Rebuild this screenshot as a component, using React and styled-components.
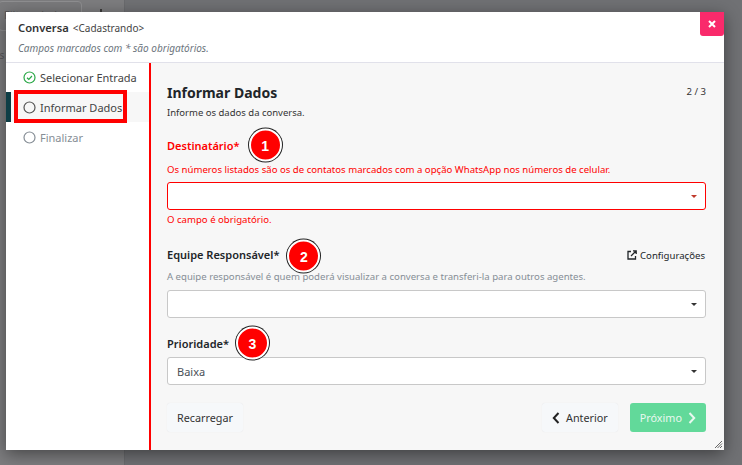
import React from 'react';
import styled, { createGlobalStyle } from 'styled-components';

const GlobalStyle = createGlobalStyle`
  html, body { margin: 0; padding: 0; height: 100%; background: #6f7073; overflow: hidden; }
  body { font-family: 'Noto Sans', 'Open Sans', sans-serif; color: #212529; }
  * { box-sizing: border-box; }
`;

const Backdrop = styled.div`
  position: relative;
  width: 742px;
  height: 465px;
  padding: 12px 18px 15px 6px;
  background: #707174;
`;

// what shows of the page behind the modal
const GhostSide = styled.div`
  position: absolute;
  left: 0;
  top: 0;
  bottom: 0;
  width: 125px;
  background: #7d7d7f;
  border-right: 1px solid #6a6b6e;
`;

const GhostInput = styled.div`
  position: absolute;
  left: -2px;
  top: 1px;
  width: 84px;
  height: 30px;
  padding: 5px 0 0 5px;
  border: 1px solid #8f8f91;
  border-radius: 4px;
  background: #7a7a7c;
  font-size: 11px;
  color: #58585a;
`;

const GhostMark = styled.div`
  position: absolute;
  left: 100px;
  top: 9px;
  width: 2px;
  height: 3px;
  background: #3b3a3a;
`;

const GhostText = styled.div`
  position: absolute;
  left: -6px;
  top: 48px;
  font-size: 10px;
  color: #58585a;
`;

const Modal = styled.div`
  position: relative;
  height: 438px;
  display: flex;
  flex-direction: column;
  background: #fff;
  box-shadow: 0 4px 16px rgba(0, 0, 0, 0.45);
`;

const Header = styled.header`
  height: 51px;
  flex: none;
  padding: 8px 12px 0;
  border-bottom: 1px solid #e1e1ea;
`;

const TitleRow = styled.div`
  display: flex;
  align-items: baseline;
  gap: 4px;
  height: 16px;
  line-height: 16px;
`;

const Title = styled.span`
  font-size: 11.2px;
  font-weight: 600;
  color: #333;
`;

const TitleState = styled.span`
  font-size: 10px;
  color: #444;
`;

const Hint = styled.div`
  margin-top: 5px;
  font-size: 10px;
  line-height: 14px;
  font-style: italic;
  color: #6c757d;
`;

const CloseButton = styled.button`
  position: absolute;
  top: 0;
  right: 0;
  width: 24px;
  height: 24px;
  padding: 0;
  border: 0;
  border-radius: 0 0 3px 3px;
  background: #f92a6b;
  display: flex;
  align-items: center;
  justify-content: center;
`;

const Body = styled.div`
  flex: 1;
  display: flex;
  min-height: 0;
`;

const Sidebar = styled.nav`
  width: 145px;
  flex: none;
  border-right: 2px solid #f00;
`;

const Step = styled.div`
  position: relative;
  height: 30px;
  display: flex;
  align-items: center;
  gap: 4px;
  padding-left: 17px;
  font-size: 11px;
  color: ${(p) => (p.$muted ? '#868e96' : '#444')};
  background: ${(p) => (p.$active ? '#f7f7f7' : 'transparent')};
  ${(p) => p.$active && 'border-left: 5px solid #0e3e46; padding-left: 12px;'}

  &:first-child {
    margin-top: -1px;
  }
`;

const Highlight = styled.div`
  position: absolute;
  left: 8px;
  top: 78px;
  width: 113px;
  height: 33px;
  border: 4px solid #f00;
  pointer-events: none;
`;

const Content = styled.main`
  flex: 1;
  min-width: 0;
  padding: 19px 18px 0 16px;
  background: #f7f7f7;
`;

const ContentHead = styled.div`
  display: flex;
  justify-content: space-between;
  align-items: flex-start;
`;

const Heading = styled.h2`
  margin: 0;
  font-size: 14px;
  line-height: 21px;
  font-weight: 700;
  color: #212529;
`;

const StepCount = styled.span`
  font-size: 9.6px;
  line-height: 20px;
  color: #333;
`;

const Lead = styled.p`
  margin: 3px 0 0;
  font-size: 9.5px;
  line-height: 14px;
  color: #333;
`;

const Field = styled.div`
  margin-top: ${(p) => p.$gap}px;
`;

const LabelRow = styled.div`
  display: flex;
  justify-content: space-between;
  align-items: center;
  height: 16px;
`;

const Label = styled.label`
  position: relative;
  font-size: 11px;
  line-height: 16px;
  font-weight: 600;
  color: ${(p) => (p.$error ? '#f00' : '#212529')};
`;

const Help = styled.div`
  margin-top: ${(p) => p.$top}px;
  font-size: 9.6px;
  line-height: 14px;
  color: ${(p) => (p.$error ? '#f00' : '#868e96')};
`;

const Select = styled.div`
  height: 28px;
  margin-top: ${(p) => p.$top}px;
  padding: 0 9px;
  display: flex;
  align-items: center;
  background: #fff;
  border: 1px solid ${(p) => (p.$error ? '#f00' : '#c8c8c8')};
  border-radius: 3px;
  font-size: 11px;
  color: #495057;

  &::after {
    content: '';
    margin-left: auto;
    margin-right: -1px;
    border-left: 3px solid transparent;
    border-right: 3px solid transparent;
    border-top: 3px solid ${(p) => (p.$error ? '#c0392b' : '#333')};
  }
`;

const ErrorText = styled.div`
  margin-top: 3px;
  font-size: 9.6px;
  line-height: 14px;
  color: #f00;
`;

const SettingsLink = styled.span`
  display: flex;
  align-items: center;
  gap: 3px;
  margin-right: 1px;
  font-size: 9.6px;
  color: #212529;
`;

const Badge = styled.span`
  position: absolute;
  top: 50%;
  left: calc(100% + ${(p) => p.$offset}px);
  width: 33px;
  height: 33px;
  margin-top: ${(p) => p.$lift}px;
  transform: translateY(-50%);
  display: flex;
  align-items: center;
  justify-content: center;
  border-radius: 50%;
  background: #f00;
  border: 2px solid #fff;
  box-shadow: 0 0 0 1px #222;
  color: #fff;
  font-family: 'Liberation Sans', sans-serif;
  font-size: 14px;
  font-weight: 700;
`;

const Footer = styled.div`
  margin-top: 18px;
  display: flex;
  align-items: center;
  gap: 12px;
`;

const Button = styled.button`
  height: 29px;
  padding: 0 10px;
  display: flex;
  align-items: center;
  gap: 6px;
  border: 0;
  border-radius: 3px;
  font-family: inherit;
  font-size: 10.8px;
  color: ${(p) => (p.$primary ? '#e8f8ef' : '#333')};
  background: ${(p) => (p.$primary ? '#62d99a' : '#f6f8fa')};
  box-shadow: ${(p) => (p.$primary ? 'none' : '0 0 1px rgba(0, 0, 0, 0.1)')};
  ${(p) => p.$push && 'margin-left: auto;'}
`;

const Grip = styled.svg`
  position: absolute;
  right: 1px;
  bottom: 1px;
`;

const CheckIcon = () => (
  <svg width="13" height="13" viewBox="0 0 13 13" fill="none">
    <circle cx="6.5" cy="6.5" r="5.5" stroke="#28a745" strokeWidth="1.2" />
    <path d="M4 6.7l1.8 1.7L9 5" stroke="#28a745" strokeWidth="1.2" />
  </svg>
);

const RingIcon = ({ color }) => (
  <svg width="13" height="13" viewBox="0 0 13 13" fill="none">
    <circle cx="6.5" cy="6.5" r="5.5" stroke={color} strokeWidth="1.2" />
  </svg>
);

const Chevron = ({ d, color }) => (
  <svg width="8" height="12" viewBox="0 0 8 12" fill="none">
    <path d={d} stroke={color} strokeWidth="2" />
  </svg>
);

export default function App() {
  return (
    <Backdrop>
      <GlobalStyle />
      <GhostSide />
      <GhostInput>Filtrar dados</GhostInput>
      <GhostMark />
      <GhostText>as</GhostText>
      <Modal>
        <Header>
          <TitleRow>
            <Title>Conversa</Title>
            <TitleState>&lt;Cadastrando&gt;</TitleState>
          </TitleRow>
          <Hint>Campos marcados com * são obrigatórios.</Hint>
        </Header>
        <CloseButton aria-label="Fechar">
          <svg width="8" height="8" viewBox="0 0 8 8">
            <path d="M1 1l6 6M7 1L1 7" stroke="#fff" strokeWidth="2" />
          </svg>
        </CloseButton>
        <Body>
          <Sidebar>
            <Step>
              <CheckIcon />
              Selecionar Entrada
            </Step>
            <Step $active>
              <RingIcon color="#555" />
              Informar Dados
            </Step>
            <Step $muted>
              <RingIcon color="#868e96" />
              Finalizar
            </Step>
          </Sidebar>
          <Content>
            <ContentHead>
              <Heading>Informar Dados</Heading>
              <StepCount>2 / 3</StepCount>
            </ContentHead>
            <Lead>Informe os dados da conversa.</Lead>

            <Field $gap={18}>
              <LabelRow>
                <Label $error>
                  Destinatário*
                  <Badge $offset={9} $lift={-1}>1</Badge>
                </Label>
              </LabelRow>
              <Help $error $top={9}>Os números listados são os de contatos marcados com a opção WhatsApp nos números de celular.</Help>
              <Select $error $top={5} />
              <ErrorText>O campo é obrigatório.</ErrorText>
            </Field>

            <Field $gap={20}>
              <LabelRow>
                <Label>
                  Equipe Responsável*
                  <Badge $offset={8} $lift={1}>2</Badge>
                </Label>
                <SettingsLink>
                  <svg width="10" height="10" viewBox="0 0 10 10" fill="none">
                    <path d="M4 1.5H1v7.500h7.500V6" stroke="#212529" strokeWidth="1.3" />
                    <path d="M4 6l5-5M6 .8h3.200V4" stroke="#212529" strokeWidth="1.3" />
                  </svg>
                  Configurações
                </SettingsLink>
              </LabelRow>
              <Help $top={7}>A equipe responsável é quem poderá visualizar a conversa e transferi-la para outros agentes.</Help>
              <Select $top={6} />
            </Field>

            <Field $gap={18}>
              <LabelRow>
                <Label>
                  Prioridade*
                  <Badge $offset={7} $lift={-1}>3</Badge>
                </Label>
              </LabelRow>
              <Select $top={5}>Baixa</Select>
            </Field>

            <Footer>
              <Button>Recarregar</Button>
              <Button $push>
                <Chevron d="M6.500 1L1.800 6l4.700 5" color="#222" />
                Anterior
              </Button>
              <Button $primary>
                Próximo
                <Chevron d="M1.500 1l4.700 5-4.700 5" color="#e8f8ef" />
              </Button>
            </Footer>
          </Content>
        </Body>
        <Highlight />
        <Grip width="9" height="9" viewBox="0 0 9 9">
          <path d="M1 8l7-7M3.500 8L8 3.500M6 8l2-2" stroke="#666" strokeWidth="1" />
        </Grip>
      </Modal>
    </Backdrop>
  );
}
